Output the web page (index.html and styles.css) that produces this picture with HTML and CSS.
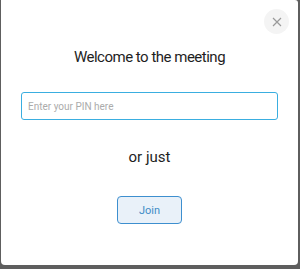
FILE: index.html
```html
<!DOCTYPE html>
<html lang="en">
<head>
    <title>meeting</title>
    <link rel="stylesheet" href="styles.css">
</head>
<body>
    <div class="dialog">
        <div class="top">
            <button class="close" aria-label="close">
                <svg width="10" height="10" viewBox="0 0 10 10">
                    <path d="M1 1 L9 9 M9 1 L1 9" stroke="#9a9a9a" stroke-width="1.2" fill="none"/>
                </svg>
            </button>
        </div>
        <h2 class="title">Welcome to the meeting</h2>
        <input class="pin" type="text" placeholder="Enter your PIN here">
        <p class="orjust">or just</p>
        <button class="join">Join</button>
    </div>
</body>
</html>
```

FILE: styles.css
```css
html, body{
    margin: 0;
    height: 100%;
}
body{
    background-color: #5e5e5e;
    padding: 0 2px 4px 1px;
    box-sizing: border-box;
    font-family: Roboto, "Noto Sans", sans-serif;
}
.dialog{
    background-color: #fff;
    height: 100%;
    border-radius: 0 3px 4px 4px;
    display: flex;
    flex-direction: column;
    align-items: center;
    box-sizing: border-box;
    padding: 9px 20px 0 20px;
}
.top{
    align-self: stretch;
    display: flex;
    justify-content: flex-end;
    margin-right: -11px;
}
.close{
    width: 25px;
    height: 25px;
    border-radius: 50%;
    border: none;
    background-color: #f4f4f4;
    display: flex;
    align-items: center;
    justify-content: center;
    padding: 0;
}
.title{
    font-size: 15px;
    font-weight: 400;
    color: #1e1e1e;
    margin: 14px 0 0 0;
    letter-spacing: -0.5px;
}
.pin{
    align-self: stretch;
    margin: 26px 0 0 0;
    height: 28px;
    box-sizing: border-box;
    border: 1px solid #3aaee0;
    border-radius: 3px;
    padding: 0 6px;
    font-family: inherit;
    font-size: 10px;
    outline: none;
}
.pin::placeholder{
    color: #ababab;
}
.orjust{
    font-size: 15px;
    color: #1e1e1e;
    margin: 28px 0 0 0;
}
.join{
    margin: 30px 0 0 0;
    width: 65px;
    height: 28px;
    background-color: #e9f1f9;
    border: 1px solid #3d8fcf;
    border-radius: 4px;
    color: #3e8cc6;
    font-family: inherit;
    font-size: 11px;
}
```
